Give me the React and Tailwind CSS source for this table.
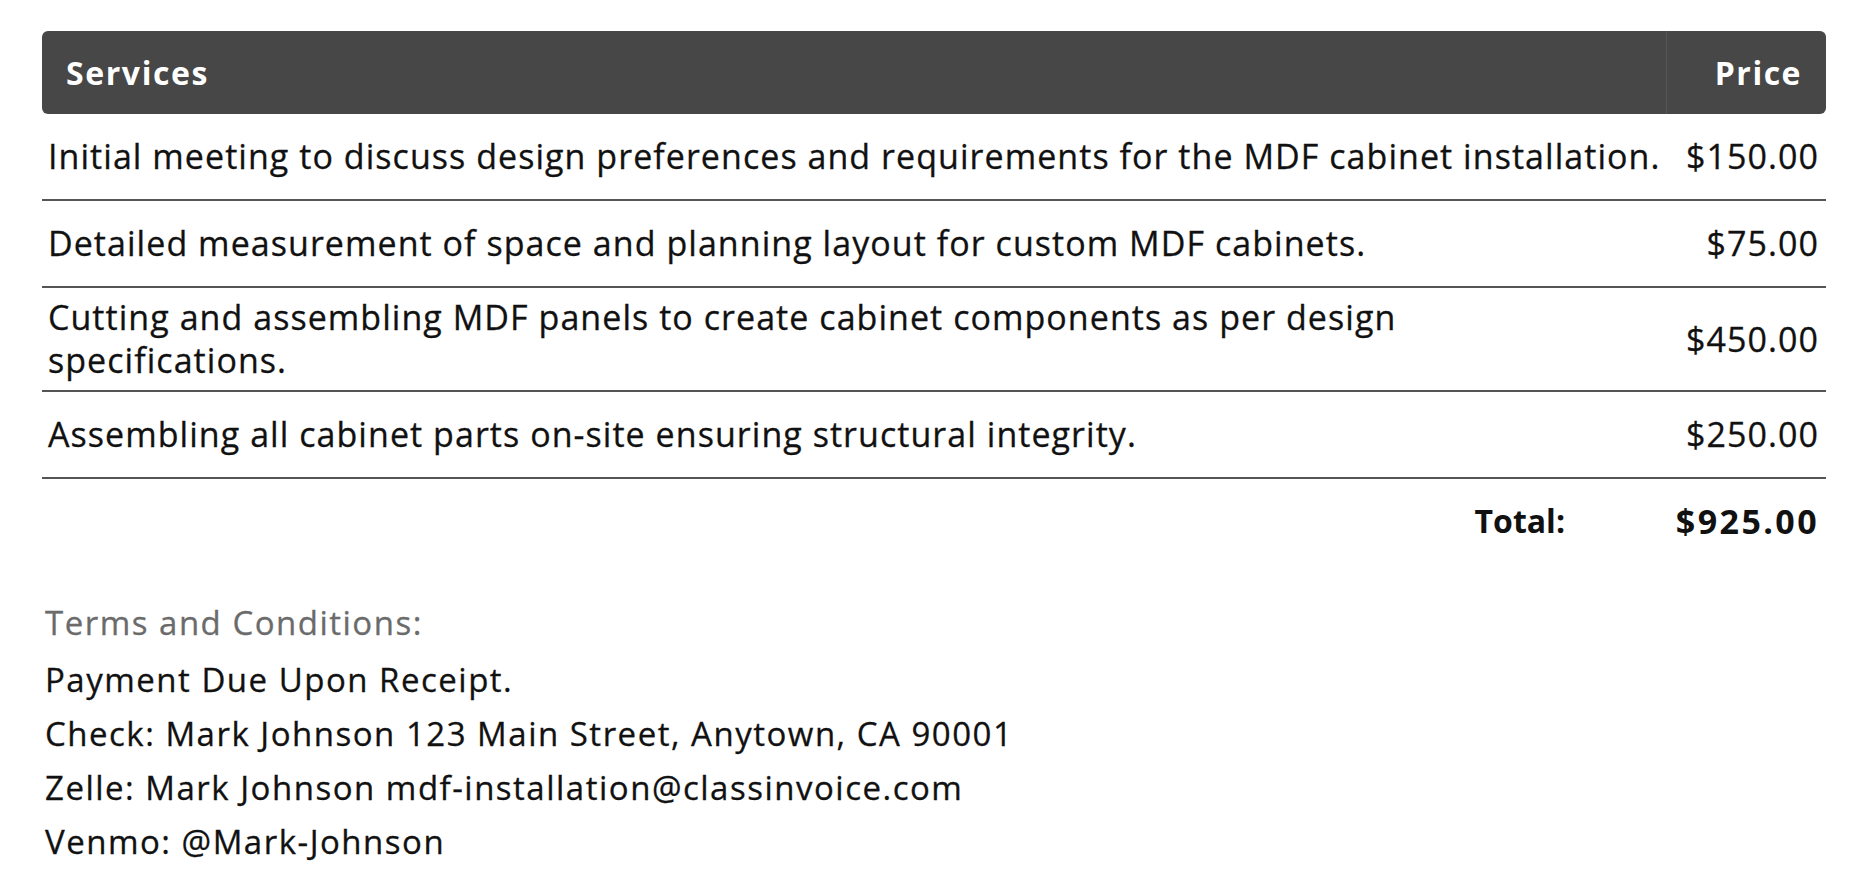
import React from 'react';

const rows = [
  { desc: 'Initial meeting to discuss design preferences and requirements for the MDF cabinet installation.', price: '$150.00' },
  { desc: 'Detailed measurement of space and planning layout for custom MDF cabinets.', price: '$75.00' },
  { desc: 'Cutting and assembling MDF panels to create cabinet components as per design\nspecifications.', price: '$450.00' },
  { desc: 'Assembling all cabinet parts on-site ensuring structural integrity.', price: '$250.00' },
];

export default function App() {
  return (
    <div className="min-h-screen bg-white px-[42px] pt-[31px] text-[#111] font-['Open_Sans','Noto_Sans',sans-serif]">
      {/* Services table */}
      <div className="w-full">
        <div className="flex h-[83px] items-center rounded-[6px] bg-[#474747] text-white">
          <div className="flex-1 pl-[24px] text-[32px] font-bold tracking-[1.6px]">Services</div>
          <div className="flex h-full w-[160px] items-center justify-end border-l border-[#555] pr-[24px] text-[32px] font-bold tracking-[1.5px]">
            Price
          </div>
        </div>

        {rows.map((r) => (
          <div key={r.price} className="flex min-h-[87px] items-center border-b-2 border-[#555] py-[8px] text-[34px] leading-[43px] tracking-[1.05px] [-webkit-text-stroke:0.3px_#111]">
            <div className="min-w-0 flex-1 whitespace-pre pl-[6px]">{r.desc}</div>
            <div className="w-[160px] shrink-0 pr-[7px] text-right">{r.price}</div>
          </div>
        ))}

        <div className="flex min-h-[84px] items-center justify-end font-bold">
          <div className="pr-[101px] text-[32px]">Total:</div>
          <div className="w-[160px] pr-[7px] text-right text-[34px] tracking-[2.4px]">$925.00</div>
        </div>
      </div>

      {/* Terms */}
      <div className="mt-[33px] pl-[3px] text-[33px] leading-[54px] tracking-[1.5px] [-webkit-text-stroke:0.3px_currentColor]">
        <div className="mb-[3px] text-[#6b6b6b]">Terms and Conditions:</div>
        <div>Payment Due Upon Receipt.</div>
        <div>Check: Mark Johnson 123 Main Street, Anytown, CA 90001</div>
        <div>Zelle: Mark Johnson mdf-installation@classinvoice.com</div>
        <div>Venmo: @Mark-Johnson</div>
      </div>
    </div>
  );
}
